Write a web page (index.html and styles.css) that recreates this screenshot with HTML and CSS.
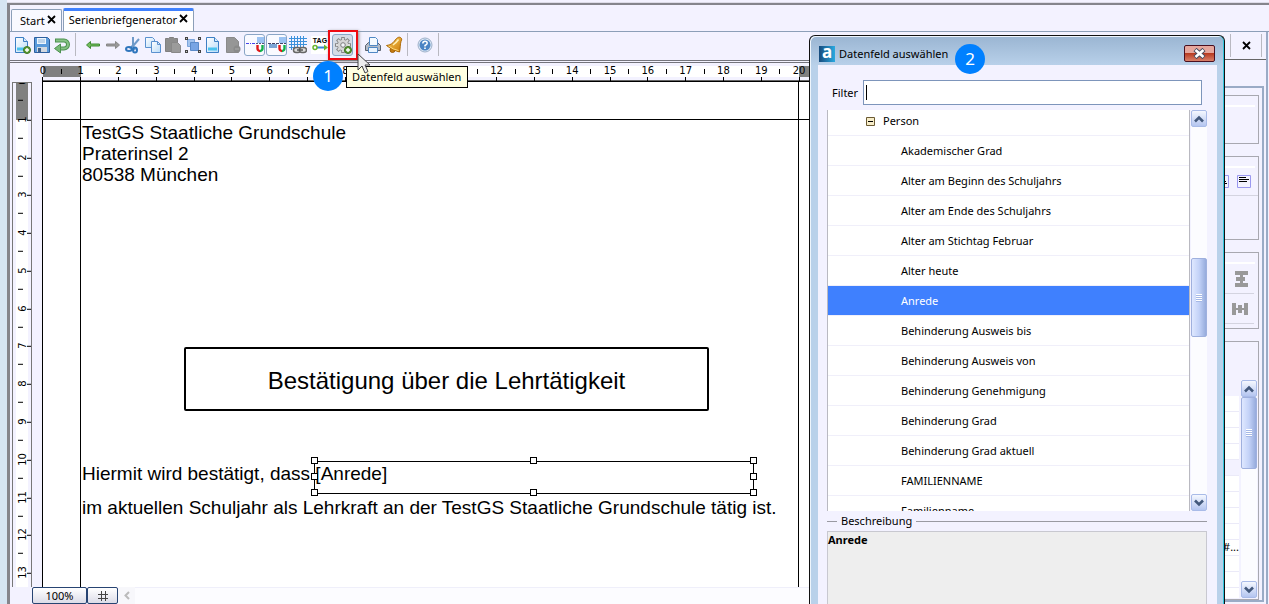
FILE: index.html
```html
<!DOCTYPE html>
<html lang="de">
<head>
<meta charset="utf-8">
<title>Serienbriefgenerator</title>
<link rel="stylesheet" href="styles.css">
</head>
<body>
<svg class="defs" aria-hidden="true">
  <defs>
    <linearGradient id="sheet" x1="0" y1="0" x2="1" y2="1"><stop offset="0" stop-color="#fff"/><stop offset="1" stop-color="#b9dcf8"/></linearGradient>
    <linearGradient id="gold" x1="0" y1="0" x2="1" y2="1"><stop offset="0" stop-color="#ffd25e"/><stop offset="1" stop-color="#c97908"/></linearGradient>
    <symbol id="plus" viewBox="0 0 8 8"><circle cx="4" cy="4" r="3.5" fill="#5b9a35" stroke="#3e7622"/><path d="M4 2v4M2 4h4" stroke="#fff" stroke-width="1.4"/></symbol>
    <symbol id="magnet" viewBox="0 0 8 8"><path d="M1.500 0v3.500A2.500 2.500 0 0 0 4 6" fill="none" stroke="#e01818" stroke-width="2.400"/><path d="M6.500 0v3.500A2.500 2.500 0 0 1 4 6" fill="none" stroke="#12b04a" stroke-width="2.400"/></symbol>
    <symbol id="up" viewBox="0 0 10 8"><path d="M1 6.500 5 2.500l4 4" fill="none" stroke="#42587c" stroke-width="2.600"/></symbol>
    <symbol id="down" viewBox="0 0 10 8"><path d="M1 1.500 5 5.500l4-4" fill="none" stroke="#42587c" stroke-width="2.600"/></symbol>
    <symbol id="close" viewBox="0 0 9 9"><path d="M1 1l7 7M8 1 1 8" stroke="#000" stroke-width="1.800"/></symbol>
  </defs>
</svg>
<div class="app">
  <div class="ribbon"></div>
  <div class="window">
    <nav class="tabs">
      <button class="tab">Start <svg width="9" height="9"><use href="#close"/></svg></button>
      <button class="tab tab-active">Serienbriefgenerator <svg width="9" height="9"><use href="#close"/></svg></button>
    </nav>
    <div class="workspace">
      <main class="editor">
        <div class="toolbar">
          <button class="tool" aria-label="Neu"><svg viewBox="0 0 18 18"><path d="M2.500 1.500h8l4 4v11h-12z" fill="url(#sheet)" stroke="#3d7fc4"/><path d="M10.500 1.500v4h4" fill="#d6ebfb" stroke="#3d7fc4"/><path d="M4 13h7" stroke="#4bc3ee" stroke-width="3"/><use href="#plus" x="10" y="10" width="8" height="8"/></svg></button>
          <button class="tool" aria-label="Speichern"><svg viewBox="0 0 18 18"><path d="M1.500 1.500h13l2 2v13h-15z" fill="#5a9adb" stroke="#2d5f9e"/><path d="M4 2h9v6H4z" fill="#eef6fe"/><path d="M5 4h7M5 6h7" stroke="#90b3d8"/><path d="M4 11h10v5H4z" fill="#d2d8e0"/><path d="M5 12h3v4H5z" fill="#40638f"/></svg></button>
          <button class="tool" aria-label="Zurücksetzen"><svg viewBox="0 0 18 18"><path d="M2 4.500h9a4 4 0 0 1 0 8H6" fill="none" stroke="#4d9150" stroke-width="4"/><path d="M3 4.500h8a4 4 0 0 1 0 8H6" fill="none" stroke="#85c283" stroke-width="2"/><path d="M7.500 8v9l-6-4.500z" fill="#78b977" stroke="#4d9150"/></svg></button>
          <span class="sep"></span>
          <button class="tool" aria-label="Rückgängig"><svg viewBox="0 0 18 18"><path d="M2.500 9l4-3.500v2.500h9v2h-9v2.500z" fill="#73bd5b" stroke="#3f8b35"/></svg></button>
          <button class="tool" aria-label="Wiederholen"><svg viewBox="0 0 18 18"><path d="M15.500 9l-4-3.500v2.500h-9v2h9v2.500z" fill="#999" stroke="#888"/></svg></button>
          <button class="tool" aria-label="Ausschneiden"><svg viewBox="0 0 18 18"><path d="M9 1v8l-3 4M15 3 9 10l2 4" fill="none" stroke="#6f9ac9" stroke-width="2"/><ellipse cx="5" cy="13" rx="3" ry="2" fill="none" stroke="#2f76bd" stroke-width="2"/><ellipse cx="11" cy="14" rx="2" ry="2.500" fill="none" stroke="#2f76bd" stroke-width="2"/></svg></button>
          <button class="tool" aria-label="Kopieren"><svg viewBox="0 0 18 18"><path d="M1.500 1.500h7l2 2v8h-9z" fill="url(#sheet)" stroke="#5a91cf"/><path d="M7.500 5.500h6l3 3v8h-9z" fill="url(#sheet)" stroke="#5a91cf"/><path d="M13.500 5.500v3h3" fill="none" stroke="#5a91cf"/></svg></button>
          <button class="tool" aria-label="Einfügen"><svg viewBox="0 0 18 18"><path d="M1.500 2.500h3l1-1h4l1 1h3v13h-12z" fill="#8d8d8d" stroke="#808080"/><path d="M7.500 6.500h6l3 3v7h-9z" fill="#9b9b9b" stroke="#888"/></svg></button>
          <button class="tool" aria-label="Gruppieren"><svg viewBox="0 0 18 18"><path d="M3.500 3.500h7v7h-7z" fill="#a3c4ee" stroke="#7da5dc"/><path d="M6.500 6.500h8v8h-8z" fill="#78a5e4" stroke="#5a8ac8"/><path d="M1 1h3v3H1zM14 1h3v3h-3zM1 14h3v3H1zM14 14h3v3h-3z" fill="#444"/><path d="M2 2h1v1H2zM15 2h1v1h-1zM2 15h1v1H2zM15 15h1v1h-1z" fill="#ccc"/></svg></button>
          <button class="tool" aria-label="Seite"><svg viewBox="0 0 18 18"><path d="M2.500 1.500h8l4 4v11h-12z" fill="url(#sheet)" stroke="#3d7fc4"/><path d="M10.500 1.500v4h4" fill="#d6ebfb" stroke="#3d7fc4"/><path d="M4 13h9" stroke="#4bc3ee" stroke-width="3"/></svg></button>
          <button class="tool" aria-label="Seite entfernen"><svg viewBox="0 0 18 18"><path d="M2.500 1.500h8l4 4v11h-12z" fill="#969696" stroke="#8a8a8a"/><circle cx="13" cy="13" r="3.500" fill="#8a8a8a"/><path d="M11 13h4" stroke="#aaa"/></svg></button>
          <button class="tool tool-on" aria-label="An Linien ausrichten"><svg viewBox="0 0 18 18"><path d="M11 1h7v6h-7z" fill="#9cc3f3"/><path d="M0 7.500h10" stroke="#4444ee" stroke-dasharray="3 1 1 1"/><path d="M10 7.500h8" stroke="#557" stroke-dasharray="2 1"/><use href="#magnet" x="10" y="9" width="8" height="8"/></svg></button>
          <button class="tool tool-on" aria-label="An Objekten ausrichten"><svg viewBox="0 0 18 18"><path d="M11 1h7v6h-7z" fill="#9cc3f3"/><path d="M1 8h8v4H1z" fill="#7ba5d5"/><path d="M0 7.500h18" stroke="#446" stroke-dasharray="3 1"/><use href="#magnet" x="10" y="9" width="8" height="8"/></svg></button>
          <button class="tool tool-wide" aria-label="Raster"><svg viewBox="0 0 18 18"><path d="M2.500 0v14M5.500 0v14M8.500 0v12M11.500 0v12M14.500 0v12M0 2.500h18M0 5.500h18M0 8.500h18M0 11.500h6" stroke="#3c91dc"/><rect x="4.500" y="11.500" width="7" height="5" rx="2.500" fill="#ddd" stroke="#666" stroke-width="1.500"/><rect x="10.500" y="11.500" width="7" height="5" rx="2.500" fill="#ddd" stroke="#666" stroke-width="1.500"/><path d="M8 14h6" stroke="#555" stroke-width="1.500"/></svg></button>
          <button class="tool tool-wide" aria-label="Tag"><svg class="tag" viewBox="0 0 18 18"><text x="9" y="7" class="tag-text">TAG</text><path d="M5 11.500h9" stroke="#3487d8" stroke-width="2"/><circle cx="4" cy="11.500" r="2" fill="#fff" stroke="#69b52f" stroke-width="1.500"/><path d="M13 8.500l4 3-4 3z" fill="#69b52f"/></svg></button>
          <button class="tool tool-on tool-field" aria-label="Datenfeld auswählen"><svg viewBox="0 0 18 18"><path d="M9 1v16M1 9h16M3.300 3.300l11.400 11.400M14.700 3.300 3.300 14.700" stroke="#858585" stroke-width="3.600"/><circle cx="9" cy="9" r="6" fill="#858585"/><path d="M9 2v14M2 9h14M4 4l10 10M14 4 4 14" stroke="#dedede" stroke-width="1.800"/><circle cx="9" cy="9" r="5.200" fill="#d6d6d6"/><circle cx="9" cy="9" r="2.300" fill="#f4f6fa" stroke="#7c7c7c"/><use href="#plus" x="10" y="10" width="8" height="8"/></svg></button>
          <span class="gap"></span>
          <button class="tool tool-wide" aria-label="Drucken"><svg viewBox="0 0 18 18"><path d="M1.500 9.500l3-3h9l3 3v5h-15z" fill="#b2bac6" stroke="#59616d"/><path d="M5.500 1.500h6l2 2v6h-8z" fill="#f4faff" stroke="#4f88c4"/><path d="M4.500 11.500h9v5h-9z" fill="#eaf5ff" stroke="#4f88c4"/></svg></button>
          <button class="tool" aria-label="Glocke"><svg viewBox="0 0 18 18"><ellipse cx="7.500" cy="14" rx="2.500" ry="2.500" fill="#c67b12" stroke="#9c5f05"/><path d="M15.500 1.500c1.500 1 1.500 2 .5 4-1 3-.5 6-1.500 10.500Q7 14.500 1.500 9.500c4-.5 6-2 8-4.500 2-3 4-4.500 6-3.500z" fill="url(#gold)" stroke="#ad6905"/><path d="M3.500 10Q8 13.500 13.500 14.500" fill="none" stroke="#ffdc7c"/><path d="M13.500 3.500Q11 7 8 9" fill="none" stroke="#fff0b5" stroke-width="1.500"/></svg></button>
          <span class="sep sep-tight"></span>
          <button class="tool" aria-label="Hilfe"><svg viewBox="0 0 18 18"><circle cx="9" cy="9" r="7" fill="#dce7f4" stroke="#9db1ca"/><circle cx="9" cy="9" r="5.500" fill="#4b84c4"/><path d="M6.800 7.500q0-2.300 2.200-2.300t2.200 2q0 1-2.200 2.300v1" fill="none" stroke="#fff" stroke-width="1.500"/><path d="M9 11.500V13" stroke="#fff" stroke-width="1.600"/></svg></button>
          <span class="sep sep-tight"></span>
        </div>
        <div class="canvas">
          <div class="ruler-h"><div class="scale-h">
            <span>0</span><span>1</span><span>2</span><span>3</span><span>4</span><span>5</span><span>6</span><span>7</span><span>8</span><span>9</span><span>10</span><span>11</span><span>12</span><span>13</span><span>14</span><span>15</span><span>16</span><span>17</span><span>18</span><span>19</span><span>20</span>
          </div></div>
          <div class="ruler-v"><div class="scale-v">
            <span>0</span><span>1</span><span>2</span><span>3</span><span>4</span><span>5</span><span>6</span><span>7</span><span>8</span><span>9</span><span>10</span><span>11</span><span>12</span><span>13</span>
          </div></div>
          <article class="page">
            <address class="sender">TestGS Staatliche Grundschule<br>Praterinsel 2<br>80538 München</address>
            <h1 class="heading">Bestätigung über die Lehrtätigkeit</h1>
            <p class="line">Hiermit wird bestätigt, dass <span class="field">[Anrede]<i class="h nw"></i><i class="h n"></i><i class="h ne"></i><i class="h w"></i><i class="h e"></i><i class="h sw"></i><i class="h s"></i><i class="h se"></i></span></p>
            <p class="line">im aktuellen Schuljahr als Lehrkraft an der TestGS Staatliche Grundschule tätig ist.</p>
          </article>
          <footer class="statusbar">
            <button class="zoom">100%</button>
            <button class="zoom zoom-grid" aria-label="Raster"><svg width="10" height="10"><path d="M3.500 0v10M7.500 0v10M0 3.500h10M0 7.500h10" stroke="#444"/></svg></button>
            <button class="left" disabled aria-label="Links"><svg width="6" height="9"><path d="M5 1 1.500 4.500 5 8" fill="none" stroke="#bbb" stroke-width="2"/></svg></button>
            <div class="hscroll"></div>
          </footer>
        </div>
      </main>
      <aside class="side">
        <div class="side-head"><button class="side-close" aria-label="Schließen"><svg width="9" height="9"><use href="#close"/></svg></button></div>
        <div class="props">
          <section class="group group-a"></section>
          <section class="group group-b">
            <div class="align">
              <svg width="14" height="13"><path d="M.5.500h13v12H.500z" fill="#f4f3ff" stroke="#9a98f0"/><path d="M2 4.500h5M2 6.500h9M2 8.500h10" stroke="#000"/></svg>
              <svg width="14" height="13"><path d="M.5.500h13v12H.500z" fill="#f4f3ff" stroke="#9a98f0"/><path d="M2 2.500h7M2 4.500h10M2 6.500h8" stroke="#000"/></svg>
            </div>
          </section>
          <section class="group group-c">
            <div class="dist"><svg width="14" height="16"><path d="M1 0h13v4H1zM2 6h9v4H2zM1 12h13v4H1zM6 3h3v10H6z" fill="#999"/></svg></div>
            <div class="dist"><svg width="16" height="12"><path d="M0 0h4v12H0zM6 2h4v8H6zM12 0h4v12h-4zM3 5h10v2H3z" fill="#999"/></svg></div>
          </section>
          <section class="group group-d">
            <div class="cells"><div></div><div></div><div></div><div></div><div class="blank"></div><div></div><div></div><div></div><div></div><div class="val">#...</div><div></div><div></div><div></div></div>
            <div class="scroll"><button aria-label="Nach oben"><svg width="10" height="8"><use href="#up"/></svg></button><div class="thumb thumb-side"></div><span class="track"></span><button aria-label="Nach unten"><svg width="10" height="8"><use href="#down"/></svg></button></div>
          </section>
        </div>
      </aside>
    </div>
  </div>

  <div class="highlight"></div>
  <div class="tooltip" role="tooltip">Datenfeld auswählen</div>
  <div class="step step-1">1</div>
  <svg class="cursor" width="14" height="22"><path d="M1 1v16l4-4 3 7 3-1.500-3-6.500h5z" fill="#eee" stroke="#444"/></svg>

  <section class="dialog" role="dialog" aria-labelledby="dlg">
    <header class="titlebar">
      <span class="logo">a</span>
      <h2 id="dlg">Datenfeld auswählen</h2>
      <button class="dialog-close" aria-label="Schließen"><svg width="13" height="11"><path d="M2 1.500l9 8M11 1.500l-9 8" stroke="#444b5e" stroke-width="4.500"/><path d="M2.500 2l8 7M10.500 2l-8 7" stroke="#fff" stroke-width="2.600"/></svg></button>
    </header>
    <div class="dialog-body">
      <div class="filter"><label for="filter">Filter</label><input id="filter" type="text" autofocus><span class="caret"></span></div>
      <div class="listbox">
        <ul class="tree">
          <li class="parent"><svg width="9" height="9"><path d="M.5.500h8v8H.500z" fill="#f7edc8" stroke="#6b5a33"/><path d="M2 4.500h5" stroke="#000"/></svg>Person</li>
          <li>Akademischer Grad</li>
          <li>Alter am Beginn des Schuljahrs</li>
          <li>Alter am Ende des Schuljahrs</li>
          <li>Alter am Stichtag Februar</li>
          <li>Alter heute</li>
          <li class="selected">Anrede</li>
          <li>Behinderung Ausweis bis</li>
          <li>Behinderung Ausweis von</li>
          <li>Behinderung Genehmigung</li>
          <li>Behinderung Grad</li>
          <li>Behinderung Grad aktuell</li>
          <li>FAMILIENNAME</li>
          <li>Familienname</li>
        </ul>
        <div class="scroll"><button aria-label="Nach oben"><svg width="10" height="8"><use href="#up"/></svg></button><span class="track"></span><div class="thumb"></div><span class="track track-rest"></span><button aria-label="Nach unten"><svg width="10" height="8"><use href="#down"/></svg></button></div>
      </div>
      <h3 class="legend">Beschreibung</h3>
      <div class="desc">Anrede</div>
    </div>
  </section>
  <div class="step step-2">2</div>
</div>
</body>
</html>
```
FILE: styles.css
```css
* { box-sizing: border-box; }
body { margin: 0; font: 11px/14px "Noto Sans", "Open Sans", sans-serif; color: #000; }
button { font: inherit; color: inherit; padding: 0; margin: 0; border: 0; background: none; display: flex; align-items: center; justify-content: center; }
svg { display: block; flex: none; }
h1, h2, h3, p, ul { margin: 0; padding: 0; font-weight: normal; }
.defs { position: absolute; width: 0; height: 0; }

.app { position: relative; height: 100vh; overflow: hidden; display: flex; flex-direction: column; background: #f3f2ff; border-left: 7px solid #d6e5f3; }
.ribbon { height: 3px; flex: none; border-bottom: 1px solid #dddce8; }
.window { flex: 1; min-height: 0; display: flex; flex-direction: column; border: 2px solid #85858c; border-left-width: 3px; border-right: 0; border-bottom: 0; }

/* Tabs */
.tabs { display: flex; align-items: flex-end; gap: 1px; height: 27px; flex: none; padding-left: 1px; border-bottom: 1px solid #8c9fb8; }
.tab { height: 22px; gap: 2px; padding: 0 5px 0 8px; border: 1px solid #8c9fb8; border-bottom: 0; border-radius: 2px 2px 0 0; background: #f9f9ff; }
.tab svg { margin-bottom: 2px; }
.tab-active { height: 23px; padding: 0 5px 3px; border-top: 3px solid #3f80fe; background: #fff; }

.workspace { flex: 1; min-height: 0; display: flex; }
.editor { flex: 1; min-width: 0; display: flex; flex-direction: column; }

/* Toolbar */
.toolbar { display: flex; align-items: center; height: 31px; flex: none; padding: 0 0 3px 2px; border-bottom: 3px double #74747c; }
.tool { width: 20px; height: 22px; }
.tool svg { width: 18px; height: 18px; }
.tool-wide { width: 22px; }
.tool-on { width: 21px; margin-left: 1px; border: 1px solid #8aa5c6; border-radius: 3px; background: #f9faff; }
.tool-field { background: #d4dbe5; }
.tag { background: #fff; }
.tag-text { font: bold 7px "Liberation Sans", sans-serif; text-anchor: middle; }
.sep { width: 1px; height: 23px; margin: 0 7px 0 3px; background: #b9b9c1; }
.sep-tight { margin: 0 7px 0 3px; }
.gap { width: 9px; }

/* Document canvas with rulers */
.canvas { flex: 1; min-height: 0; display: grid; grid-template: 18px 1fr 17px / 32px 1fr; font-family: "DejaVu Sans", sans-serif; font-size: 10px; }
.ruler-h { grid-column: 2; background: linear-gradient(90deg, #808080 38px, #fff 38px 756px, #808080 756px) 1px 3px / 100% 11px no-repeat; border-bottom: 1px solid #666; }
.scale-h { display: grid; grid-template-columns: repeat(21, 1fr); width: 794px; height: 18px; margin-left: -18px; line-height: 16px; text-align: center; }
.scale-h span { background: linear-gradient(#000, #000) 50% 100% / 1px 4px no-repeat, linear-gradient(#000, #000) 100% 6px / 1px 5px no-repeat; }
.ruler-v { grid-row: 2; width: 20px; margin: 1px 0 0 2px; overflow: hidden; border: 1px solid #777; border-bottom: 0; background: linear-gradient(#808080 37px, #fff 37px) 3px 0 / 12px 100% no-repeat; }
.scale-v { display: grid; grid-template-rows: repeat(14, 1fr); height: 529px; margin-top: -20px; }
.scale-v span { writing-mode: vertical-rl; transform: rotate(180deg); text-align: center; line-height: 16px; width: 18px; padding-right: 2px; background: linear-gradient(#000, #000) 0 50% / 4px 1px no-repeat, linear-gradient(#000, #000) 8px 0 / 5px 1px no-repeat; }

.page { position: relative; grid-area: 2 / 2; overflow: hidden; padding: 40px 0 0 39px; background: #fff; border: 1px solid #000; border-width: 1px 0 0 1px; font: 19px/21px "Liberation Sans", Arial, sans-serif; }
.page::before { content: ""; position: absolute; left: 37px; top: 0; bottom: 0; width: 719px; border: 1px solid #000; border-width: 0 1px; box-sizing: border-box; }
.page::after { content: ""; position: absolute; left: 0; right: 0; top: 37px; border-top: 1px solid #000; }
.sender { font-style: normal; }
.heading { width: 525px; margin: 162px 0 46px 102px; padding: 20px 0 16px; border: 2px solid #000; border-radius: 2px; font-size: 24px; line-height: 24px; text-align: center; }
.line { height: 34px; line-height: 34px; white-space: nowrap; }
.field { position: relative; display: inline-block; width: 439px; height: 34px; }
.field::before { content: ""; position: absolute; inset: 4px 0 -3px -1px; border: 1px solid #000; }
.h { position: absolute; width: 7px; height: 7px; background: #fff; border: 1px solid #000; }
.nw, .w, .sw { left: -4px; }
.n, .s { left: 215px; }
.ne, .e, .se { right: -3px; }
.nw, .n, .ne { top: 0; }
.w, .e { top: 16px; }
.sw, .s, .se { top: 32px; }

.statusbar { grid-column: 1 / -1; display: flex; padding-left: 22px; }
.zoom { width: 55px; border: 1px solid #274472; border-radius: 2px; background: linear-gradient(#fff, #dcdce8); font: 11px "Noto Sans", sans-serif; }
.zoom-grid { width: 31px; }
.left { width: 17px; background: #f7f7fb; }
.hscroll { flex: 1; background: #fcfcff; border-top: 1px solid #efeffa; }

/* Right-hand properties panel */
.side { width: 67px; margin-right: 1px; display: flex; flex-direction: column; border-right: 2px solid #9aabc6; }
.side-head { display: flex; justify-content: flex-end; height: 28px; flex: none; padding: 2px 4px 2px 0; border-bottom: 1px solid #666; }
.side-close { width: 32px; border: 1px solid #b9b9c1; border-width: 0 1px; }
.props { flex: 1; min-height: 0; margin: 26px 2px 2px 0; padding: 7px 3px 0 0; display: flex; flex-direction: column; gap: 12px; border: 2px solid #9aabc6; border-left: 0; }
.group { border: 1px solid #a8a8b0; border-left: 0; padding-top: 9px; }
.group-a { height: 49px; flex: none; }
.group-a::before, .group-b::before, .group-c::before { content: ""; display: block; border-top: 2px solid #fff; margin-right: 3px; }
.group-b { height: 84px; flex: none; }
.align { display: flex; justify-content: flex-end; gap: 8px; height: 28px; padding: 7px 7px 0 0; border-bottom: 1px solid #d4d4e0; }
.group-c { height: 77px; flex: none; }
.dist { display: flex; justify-content: flex-end; align-items: center; height: 30px; margin-right: 4px; padding: 0 6px 0 0; border-bottom: 1px solid #d4d4e0; }
.group-d { flex: 1; min-height: 0; display: flex; justify-content: flex-end; gap: 2px; padding: 38px 1px 1px 0; }
.cells { width: 40px; padding-top: 16px; overflow: hidden; }
.cells div { height: 16px; background: #fff; border-bottom: 1px solid #ebeaf8; line-height: 14px; text-align: right; }
.cells .blank { background: none; }

/* Scroll bars */
.scroll { width: 16px; flex: none; display: flex; flex-direction: column; background: #fcfcff; }
.scroll button { height: 17px; flex: none; border: 1px solid #a9bbe8; border-radius: 2px; background: linear-gradient(#f5f8ff, #b4c5f0); }
.track { flex: 1; }
.thumb { height: 79px; flex: none; border: 1px solid #9fb0de; border-radius: 2px; background: repeating-linear-gradient(#fff 0 1px, #a5b8e6 1px 2px) 50% 50% / 6px 8px no-repeat, linear-gradient(90deg, #dfe8ff, #c3d2f8 50%, #96abdc); }
.thumb-side { height: 72px; }
.track-rest { flex: none; height: 157px; }

/* Overlays */
.highlight { position: absolute; left: 321px; top: 30px; width: 30px; height: 30px; border: 2px solid #ee0a12; box-shadow: 1px 1px 3px #888; }
.tooltip { position: absolute; left: 339px; top: 66px; padding: 2px 6px 3px 5px; border: 1px solid #000; background: #ffffe1; line-height: 15px; }
.step { position: absolute; width: 30px; height: 30px; border-radius: 50%; background: #0080ff; color: #fff; font-size: 17px; line-height: 29px; text-align: center; }
.step-1 { left: 306px; top: 61px; }
.step-2 { left: 948px; top: 44px; }
.cursor { position: absolute; left: 350px; top: 53px; }

/* Dialog */
.dialog { position: absolute; left: 802px; right: 44px; top: 35px; bottom: 0; display: flex; flex-direction: column; padding: 0 7px 0 8px; background: linear-gradient(#9ab5d2, #b9d1ea 30px); border: 1px solid #111; border-bottom: 0; border-radius: 6px 6px 0 0; box-shadow: inset -1px 0 #30c4dc, inset 1px 1px #eef5fc; }
.titlebar { display: flex; align-items: center; height: 29px; flex: none; padding: 6px 2px 0 1px; }
.titlebar h2 { flex: 1; margin-left: 4px; font-size: 11px; line-height: 16px; }
.logo { width: 16px; height: 16px; background: linear-gradient(90deg, #174b7d, #2aa9e0); color: #fff; font: bold 17px/12px "Noto Sans", sans-serif; text-align: center; }
.dialog-close { width: 31px; height: 17px; border: 1px solid #4a1020; border-radius: 2px; background: linear-gradient(#e6a79d 45%, #b83c22 50%, #d9806a); }
.dialog-body { flex: 1; min-height: 0; display: flex; flex-direction: column; padding: 15px 10px 0 9px; background: #f3f2ff; }
.filter { position: relative; display: flex; align-items: center; height: 25px; flex: none; margin: 0 5px 5px; gap: 5px; }
.filter input { flex: 1; min-width: 0; height: 25px; padding: 0 3px; border: 1px solid #7d95bb; background: #fff; font: inherit; outline: 0; caret-color: transparent; }
.caret { position: absolute; left: 34px; top: 5px; width: 1px; height: 15px; background: #000; }
.listbox { display: flex; height: 401px; flex: none; gap: 1px; }
.tree { flex: 1; overflow: hidden; list-style: none; background: #fff; border: 1px solid #b9b9c1; border-width: 0 1px; }
.tree li { height: 30px; padding-left: 73px; line-height: 29px; border-bottom: 1px solid #f0effa; }
.tree .parent { display: flex; align-items: center; gap: 8px; height: 26px; padding: 0 0 3px 38px; line-height: 22px; }
.tree .selected { background: #3f80fe; color: #fff; }
.legend { display: flex; align-items: center; gap: 4px; height: 20px; flex: none; font-size: 11px; line-height: 20px; }
.legend::before, .legend::after { content: ""; width: 10px; border-top: 1px solid #9a9aa2; }
.legend::after { flex: 1; }
.desc { flex: 1; padding: 0; border: 1px solid #c8c8d0; border-bottom: 0; background: #eee; font-weight: bold; line-height: 15px; }
```
